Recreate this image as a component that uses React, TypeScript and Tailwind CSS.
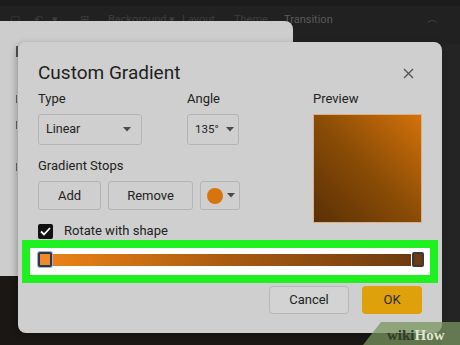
import React from "react";

const Caret = () => (
  <svg width="8" height="5" viewBox="0 0 8 5" className="shrink-0">
    <path d="M0 0 L8 0 L4 4.5 Z" fill="#4a4a4a" />
  </svg>
);

export default function App() {
  return (
    <div
      className="relative w-[460px] h-[345px] overflow-hidden bg-[#1b1714]"
      style={{ fontFamily: "Roboto, 'Open Sans', sans-serif" }}
    >
      {/* top app chrome */}
      <div className="absolute left-0 top-0 w-[460px] h-[44px] bg-[#212121] border-t-[6px] border-[#1c1c1c]">
        <div className="flex items-center pl-[10px] pt-[6px] text-[11px] text-[#3e3e3e] whitespace-nowrap">
          <span className="w-[24px] shrink-0">▢</span>
          <span className="w-[18px] shrink-0">↶</span>
          <span className="w-[28px] shrink-0">▾</span>
          <span className="w-[28px] shrink-0">⊞</span>
          <span className="w-[74px] shrink-0">Background ▾</span>
          <span className="w-[52px] shrink-0">Layout</span>
          <span className="w-[50px] shrink-0">Theme</span>
          <span className="text-[#5a5a5a]">Transition</span>
          <span className="ml-auto mr-[22px] text-[#555]">︿</span>
        </div>
      </div>
      {/* right dark strip */}
      <div className="absolute left-[442px] top-[44px] w-[18px] h-[301px] bg-[#242424]" />

      {/* background dialog */}
      <div className="absolute left-[-10px] top-[21px] w-[303px] h-[255px] bg-[#cdcdcd] rounded-tr-[8px]">
        <div className="absolute left-[26px] top-[25px] w-[2px] h-[11px] bg-[#555]" />
        <div className="absolute left-[26px] top-[74px] w-[1px] h-[8px] bg-[#666]" />
        <div className="absolute left-[26px] top-[100px] w-[1px] h-[8px] bg-[#666]" />
        <div className="absolute left-[26px] top-[142px] w-[1px] h-[8px] bg-[#666]" />
      </div>

      {/* main dialog */}
      <div className="absolute left-[18px] top-[42px] w-[424px] h-[291px] bg-[#cfcfcf] rounded-[8px] shadow-[-2px_2px_6px_rgba(0,0,0,0.25)] px-[20px] pt-[19px] text-[#222]">
        <div className="flex items-center justify-between h-[24px]">
          <span className="text-[19px] leading-[24px] text-[#1e1e1e]">Custom Gradient</span>
          <svg width="11" height="11" viewBox="0 0 11 11" className="mr-[8px]">
            <path d="M1 1 L10 10 M10 1 L1 10" stroke="#555" strokeWidth="1.4" />
          </svg>
        </div>

        <div className="flex mt-[6px]">
          <div className="flex-1 flex flex-col">
            <div className="flex">
              <div className="w-[149px] flex flex-col">
                <span className="text-[13px] leading-[16px]">Type</span>
                <div className="mt-[7px] w-[104px] h-[31px] border border-[#b4b4b4] rounded-[3px] flex items-center justify-between pl-[7px] pr-[10px] text-[12.5px]">
                  <span>Linear</span>
                  <Caret />
                </div>
              </div>
              <div className="flex flex-col">
                <span className="text-[13px] leading-[16px]">Angle</span>
                <div className="mt-[7px] w-[52px] h-[31px] border border-[#b4b4b4] rounded-[3px] flex items-center justify-between pl-[7px] pr-[4px] text-[11.5px]">
                  <span>135°</span>
                  <Caret />
                </div>
              </div>
            </div>
            <span className="mt-[13px] text-[13px] leading-[16px]">Gradient Stops</span>
            <div className="mt-[7px] flex gap-[7px]">
              <div className="w-[63px] h-[29px] border border-[#b4b4b4] rounded-[3px] flex items-center justify-center text-[13px]">
                Add
              </div>
              <div className="w-[85px] h-[29px] border border-[#b4b4b4] rounded-[3px] flex items-center justify-center text-[13px]">
                Remove
              </div>
              <div className="w-[40px] h-[29px] border border-[#b4b4b4] rounded-[3px] flex items-center pl-[6px] gap-[4px]">
                <div className="w-[16px] h-[16px] rounded-full bg-[#d9730e]" />
                <Caret />
              </div>
            </div>
            <div className="mt-[13px] flex items-center gap-[11px] h-[16px]">
              <div className="w-[15px] h-[15px] rounded-[2px] bg-[#111] flex items-center justify-center">
                <svg width="11" height="9" viewBox="0 0 11 9">
                  <path d="M1 4.5 L4 7.5 L10 1" stroke="#fff" strokeWidth="1.8" fill="none" />
                </svg>
              </div>
              <span className="text-[13px] leading-[16px]">Rotate with shape</span>
            </div>
          </div>
          <div className="w-[109px] flex flex-col">
            <span className="text-[13px] leading-[16px]">Preview</span>
            <div className="mt-[7px] w-[109px] h-[109px] bg-[linear-gradient(225deg,#d3720a_0%,#8a4c06_50%,#5a3006_100%)] border border-[#d9b08a]" />
          </div>
        </div>

        {/* highlighted gradient bar */}
        <div className="mt-[1px] -mx-[16px] h-[43px] border-[8px] border-[#1ff01f] bg-white flex items-start pt-[4px] pl-[8px] pr-[6px]">
          <div className="relative flex-1 h-[15px] flex items-center">
            <div className="w-full h-[12px] bg-[linear-gradient(90deg,#f08418,#a85a10_50%,#6a3a10)]" />
            <div className="absolute left-0 top-0 w-[14px] h-[15px] bg-[#f08a28] border-[2px] border-[#2a3650] rounded-[2px] shadow-[0_0_0_1px_#9cb4d8]" />
            <div className="absolute right-0 top-0 w-[12px] h-[15px] bg-[#6b3c12] border-[2px] border-[#3a3a3a] rounded-[2px] shadow-[0_0_0_1px_#fff]" />
          </div>
        </div>

        <div className="mt-[3px] flex justify-end gap-[13px]">
          <div className="w-[80px] h-[28px] border border-[#b8b8b8] rounded-[4px] bg-[#d3d3d3] flex items-center justify-center text-[13px]">
            Cancel
          </div>
          <div className="w-[60px] h-[28px] rounded-[4px] bg-[#dea10b] flex items-center justify-center text-[13px] text-[#2a2a2a]">
            OK
          </div>
        </div>
      </div>

      {/* watermark */}
      <svg className="absolute left-[360px] top-[322px]" width="100" height="23" viewBox="0 0 100 23">
        <path d="M21 0 L100 0 L100 23 L3 23 Z" fill="#7a9660" opacity="0.75" />
      </svg>
      <div
        className="absolute left-[387px] top-[327px] text-[15px] leading-[17px] font-bold"
        style={{ fontFamily: "'Liberation Serif', serif" }}
      >
        <span className="text-[#2f3a28]">wiki</span>
        <span className="text-[#dfe6d6]">How</span>
      </div>
    </div>
  );
}
